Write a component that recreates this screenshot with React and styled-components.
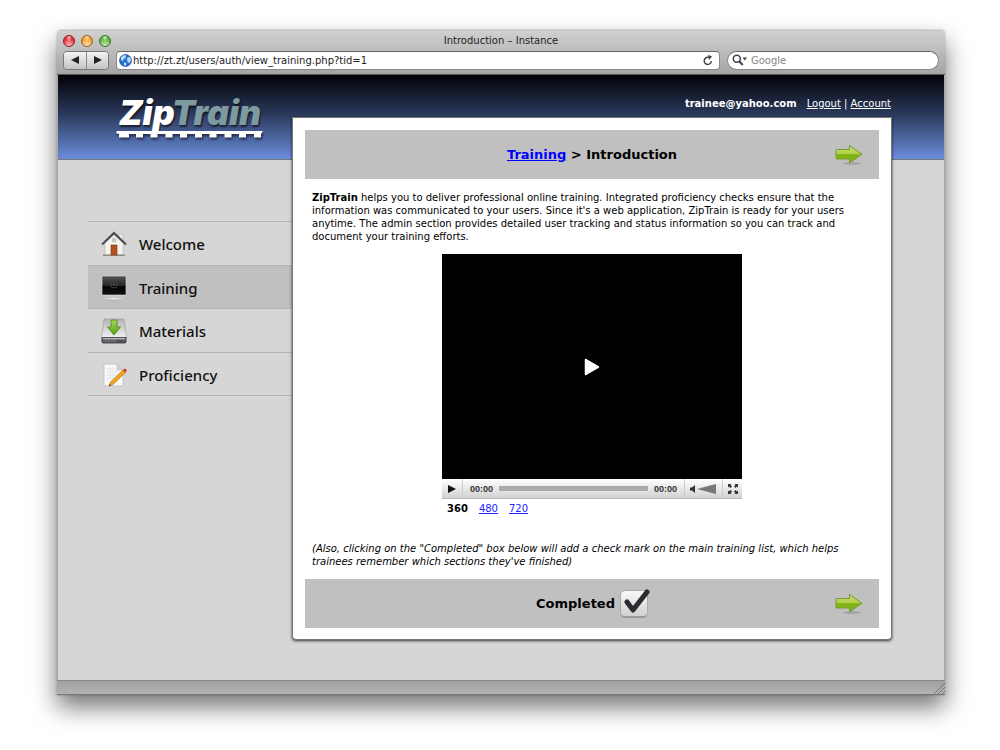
import { useState } from "react";
import styled, { createGlobalStyle } from "styled-components";

const menu = [
  { id: "welcome", label: "Welcome", Icon: HouseIcon },
  { id: "training", label: "Training", Icon: ScreenIcon },
  { id: "materials", label: "Materials", Icon: DriveIcon },
  { id: "proficiency", label: "Proficiency", Icon: NoteIcon },
];

export default function App() {
  const [done, setDone] = useState(true);

  return (
    <>
      <GlobalStyle />
      <Desktop>
        <Window>
          <Chrome>
            <TitleRow>
              <Light color="#e8353b" edge="#8d2226" aria-label="Close" />
              <Light color="#f3a02c" edge="#9a5c1c" aria-label="Minimize" />
              <Light color="#62b53c" edge="#3d7527" aria-label="Zoom" />
              <Title>Introduction – Instance</Title>
            </TitleRow>
            <Toolbar>
              <NavButtons>
                <NavButton aria-label="Back">
                  <svg width="8" height="8" viewBox="0 0 8 8">
                    <path d="M0 4 8 0v8z" fill="#222" />
                  </svg>
                </NavButton>
                <NavButton aria-label="Forward">
                  <svg width="8" height="8" viewBox="0 0 8 8">
                    <path d="M8 4 0 0v8z" fill="#222" />
                  </svg>
                </NavButton>
              </NavButtons>
              <AddressBar>
                <GlobeIcon />
                <BarInput
                  aria-label="Address"
                  defaultValue="http://zt.zt/users/auth/view_training.php?tid=1"
                />
                <ReloadButton aria-label="Reload">
                  <svg width="10" height="11" viewBox="0 0 10 11" fill="none">
                    <path d="M8.4 6.2A3.6 3.6 0 1 1 6.4 2.6" stroke="#444" strokeWidth="1.5" />
                    <path d="M4.8 0 9 1.2 6.4 4.9z" fill="#444" />
                  </svg>
                </ReloadButton>
              </AddressBar>
              <SearchBar>
                <svg width="16" height="12" viewBox="0 0 16 12" fill="none">
                  <circle cx="4.8" cy="4.8" r="3.5" stroke="#444" strokeWidth="1.5" />
                  <path d="m7.3 7.3 3.4 3.7" stroke="#444" strokeWidth="2" />
                  <path d="M10.5 3.5h4.6l-2.3 3z" fill="#444" />
                </svg>
                <BarInput aria-label="Search" placeholder="Google" />
              </SearchBar>
            </Toolbar>
          </Chrome>

          <Page>
            <Sidebar>
              <Logo />
              <Menu>
                {menu.map(({ id, label, Icon }) => (
                  <MenuLink key={id} href={`#${id}`} $active={id === "training"}>
                    <Icon />
                    {label}
                  </MenuLink>
                ))}
              </Menu>
            </Sidebar>

            <Main>
              <Account>
                <b>trainee@yahoo.com</b>
                <span>
                  <a href="#logout">Logout</a> | <a href="#account">Account</a>
                </span>
              </Account>
              <Panel>
                <Band>
                  <Heading>
                    <a href="#training">Training</a> &gt; Introduction
                  </Heading>
                  <NextLink href="#next" aria-label="Next">
                    <ArrowIcon id="top" />
                  </NextLink>
                </Band>

                <Text>
                  <b>ZipTrain</b> helps you to deliver professional online training. Integrated
                  proficiency checks ensure that the information was communicated to your users.
                  Since it's a web application, ZipTrain is ready for your users anytime. The admin
                  section provides detailed user tracking and status information so you can track
                  and document your training efforts.
                </Text>

                <Player>
                  <Video aria-label="Play video">
                    <svg width="16" height="18" viewBox="0 0 16 18">
                      <path
                        d="M1.5 1.5v15L14.5 9z"
                        fill="#fff"
                        stroke="#fff"
                        strokeWidth="1.5"
                        strokeLinejoin="round"
                      />
                    </svg>
                  </Video>
                  <Controls>
                    <ControlButton aria-label="Play">
                      <svg width="8" height="8" viewBox="0 0 8 8">
                        <path d="M0 0v8l8-4z" fill="#111" />
                      </svg>
                    </ControlButton>
                    <Timeline>
                      <span>00:00</span>
                      <Seek type="range" aria-label="Seek" defaultValue="0" />
                      <span>00:00</span>
                    </Timeline>
                    <ControlButton $wide aria-label="Volume">
                      <svg width="27" height="10" viewBox="0 0 27 10">
                        <path d="M0 3.5h2L5 1v8L2 6.500H0z" fill="#333" />
                        <path d="M7 5 26 0v10z" fill="#777" />
                      </svg>
                    </ControlButton>
                    <ControlButton aria-label="Full screen">
                      <svg width="10" height="10" viewBox="0 0 10 10">
                        <path
                          d="M0 0h3.500L2.600 1 4 2.400 2.400 4 1 2.600 0 3.500zM10 0v3.500L9 2.600 7.600 4 6 2.400 7.400 1 6.500 0zM0 10V6.500l1 .9L2.400 6 4 7.600 2.600 9l.9 1zM10 10H6.500l.9-1L6 7.600 7.600 6 9 7.400l1-.9z"
                          fill="#333"
                        />
                      </svg>
                    </ControlButton>
                  </Controls>
                  <Sizes>
                    <b>360</b>
                    <a href="#480">480</a>
                    <a href="#720">720</a>
                  </Sizes>
                </Player>

                <Note>
                  (Also, clicking on the "Completed" box below will add a check mark on the main
                  training list, which helps trainees remember which sections they've finished)
                </Note>

                <Band>
                  <Completed>
                    Completed
                    <CheckBox>
                      <input
                        type="checkbox"
                        checked={done}
                        onChange={(e) => setDone(e.target.checked)}
                      />
                      {done && <CheckMark />}
                    </CheckBox>
                  </Completed>
                  <NextLink href="#next" aria-label="Next">
                    <ArrowIcon id="bottom" />
                  </NextLink>
                </Band>
              </Panel>
            </Main>
          </Page>

          <StatusBar>
            <svg width="11" height="11" viewBox="0 0 11 11" stroke="#777">
              <path d="M0 11 11 0M4 11l7-7M8 11l3-3" />
            </svg>
          </StatusBar>
        </Window>
      </Desktop>
    </>
  );
}

function Logo() {
  return (
    <LogoBox>
      <LogoText>
        Zip<span>Train</span>
      </LogoText>
      <svg width="147" height="8" viewBox="0 0 147 8">
        <path
          fill="#fff"
          d="M1 0h146l-2 3v3.500h-7V3h-8v3.500h-7V3h-7.500v3.500h-7V3h-8v3.500h-7V3h-7.500v3.500h-7V3h-8v3.500h-7V3h-7.500v3.500h-7V3h-8v3.500h-7V3h-7.500v3.500h-7V3h-7v3.500H3V3L0 2z"
        />
      </svg>
    </LogoBox>
  );
}

function GlobeIcon() {
  return (
    <svg width="13" height="13" viewBox="0 0 13 13">
      <circle cx="6.5" cy="6.5" r="6" fill="#2a72cf" stroke="#174b98" strokeWidth=".7" />
      <path d="M2 3.500C4 1 6 1 7 1.500L6.500 4 4.500 5 4 7 2 6zM8 4l3-1 1 3-1.500 3L8.500 8zM5 8l2.500 1.500L6.500 12 5 11z" fill="#bfe0fb" />
    </svg>
  );
}

function HouseIcon() {
  return (
    <svg width="26" height="26" viewBox="0 0 26 26">
      <path d="M18 3h4v7h-4z" fill="#eee" stroke="#aaa" strokeWidth=".5" />
      <path d="M4 12 13 4l9 8v12H4z" fill="#f5f3ee" stroke="#bbb" strokeWidth=".6" />
      <path d="M2 23.500h22v1.500H2z" fill="#8d8d86" />
      <path d="M10 14h6v10h-6z" fill="#b5501f" stroke="#7c3312" strokeWidth=".6" />
      <circle cx="13" cy="9" r="2" fill="#c9ced1" stroke="#999" strokeWidth=".4" />
      <path d="M1 13.500 13 2l12 11.500" fill="none" stroke="#4b4b4b" strokeWidth="2" />
    </svg>
  );
}

function ScreenIcon() {
  return (
    <svg width="26" height="26" viewBox="0 0 26 26">
      <defs>
        <linearGradient id="screen" x2="0" y2="1">
          <stop offset="0" stopColor="#555" />
          <stop offset=".5" stopColor="#262626" />
          <stop offset=".55" stopColor="#050505" />
          <stop offset="1" stopColor="#111" />
        </linearGradient>
      </defs>
      <path d="M1 1h24v19H1z" fill="url(#screen)" stroke="#ddd" strokeWidth=".6" />
      <circle cx="13" cy="9.500" r="3.500" fill="none" stroke="#444" />
      <path d="M12 8v3l2.500-1.500z" fill="#555" />
      <path d="M1 20h24v1.500H1z" fill="#d0d0d0" />
      <ellipse cx="13" cy="24" rx="9" ry="1.500" fill="#e0e0e0" />
      <path d="M5 24.500q8 2 16 0" fill="none" stroke="#999" strokeWidth=".6" />
    </svg>
  );
}

function DriveIcon() {
  return (
    <svg width="26" height="26" viewBox="0 0 26 26">
      <defs>
        <linearGradient id="drive" x2="0" y2="1">
          <stop offset="0" stopColor="#b4b4b8" />
          <stop offset="1" stopColor="#f2f2f2" />
        </linearGradient>
        <linearGradient id="down" x2="0" y2="1">
          <stop offset="0" stopColor="#a6d957" />
          <stop offset="1" stopColor="#579f12" />
        </linearGradient>
      </defs>
      <path d="M3 1h20l2.500 19H.5z" fill="url(#drive)" stroke="#999" strokeWidth=".6" />
      <path d="M.5 19h25v4.500q0 2-2 2h-21q-2 0-2-2z" fill="#505058" />
      <path d="M2 20h22v1.500H2z" fill="#b4b4b8" />
      <path d="M4 23h12" stroke="#9a9aa4" strokeDasharray="2 1" />
      <path d="M10 2h6v7h3.500L13 17 6.500 9H10z" fill="url(#down)" stroke="#4c870d" strokeWidth=".8" />
    </svg>
  );
}

function NoteIcon() {
  return (
    <svg width="26" height="26" viewBox="0 0 26 26">
      <path d="M3 2h13l6 6v16H3z" fill="#f7f7f7" stroke="#bbb" strokeWidth=".8" />
      <path d="M16 2v6h6z" fill="#d5d5d5" stroke="#bbb" strokeWidth=".6" />
      <path d="M6 7h7M6 10h10M6 13h9M6 16h6" stroke="#dddfe0" />
      <path d="m8 24 1.500-4L22 8l2.500 2.500L12 22.500z" fill="#f2a51f" stroke="#a86a12" strokeWidth=".6" />
      <path d="M22 8l1.500-1.300q2-.4 2.200 2L24.500 10.500z" fill="#d83333" />
      <path d="m8 24 .6-1.700L10 23.500z" fill="#222" />
    </svg>
  );
}

function ArrowIcon({ id }) {
  return (
    <svg width="28" height="22" viewBox="0 0 28 22">
      <defs>
        <linearGradient id={id} x2="0" y2="1">
          <stop offset="0" stopColor="#c8dc72" />
          <stop offset=".48" stopColor="#b1d047" />
          <stop offset=".52" stopColor="#7fb412" />
          <stop offset="1" stopColor="#80b51c" />
        </linearGradient>
      </defs>
      <ellipse cx="17" cy="19.500" rx="9" ry="1.500" fill="#999" opacity=".7" />
      <path
        d="M1 6.500q0-1 1-1h12.500V1.500L27 10.200 14.500 19v-4H2q-1 0-1-1z"
        fill={`url(#${id})`}
        stroke="#7b9a35"
        strokeWidth="1"
        strokeLinejoin="round"
      />
    </svg>
  );
}

function CheckMark() {
  return (
    <svg width="30" height="30" viewBox="0 0 30 30">
      <path
        d="M7 13l6 8L27 3"
        fill="none"
        stroke="#2b2c31"
        strokeWidth="5"
        strokeLinecap="round"
        strokeLinejoin="round"
      />
    </svg>
  );
}

const GlobalStyle = createGlobalStyle`
  * {
    box-sizing: border-box;
  }

  body {
    margin: 0;
    background: #fff;
    color: #000;
    font-family: "DejaVu Sans", Verdana, sans-serif;
    font-size: 10px;
  }

  button {
    padding: 0;
    border: 0;
    background: none;
    display: flex;
    align-items: center;
    justify-content: center;
  }

  svg {
    display: block;
    flex-shrink: 0;
  }
`;

const Desktop = styled.div`
  padding: 30px 55px 55px 57px;
`;

const Window = styled.div`
  border-radius: 4px 4px 0 0;
  overflow: hidden;
  box-shadow: 0 12px 24px rgba(0, 0, 0, 0.55), 0 0 2px rgba(0, 0, 0, 0.3);
`;

const Chrome = styled.header`
  height: 45px;
  padding: 0 6px;
  background: linear-gradient(#d0d0d0, #a5a5a5);
  border-top: 1px solid #c2c2c2;
  border-bottom: 1px solid #555;
`;

const TitleRow = styled.div`
  height: 19px;
  display: flex;
  align-items: center;
  gap: 6px;
`;

const Title = styled.div`
  flex: 1;
  margin-right: 54px;
  text-align: center;
  color: #222;
`;

const Light = styled.button`
  && {
    width: 12px;
    height: 12px;
    border: 1px solid ${(p) => p.edge};
    border-radius: 50%;
    background: radial-gradient(circle at 50% 90%, #ffffffb0, transparent 60%),
      radial-gradient(ellipse at 50% 15%, #ffffffc0, transparent 35%), ${(p) => p.color};
  }
`;

const Toolbar = styled.div`
  height: 20px;
  display: flex;
  align-items: center;
  gap: 7px;
`;

const NavButtons = styled.div`
  display: flex;
  border: 1px solid #777;
  border-radius: 4px;
  overflow: hidden;
`;

const NavButton = styled.button`
  && {
    width: 22px;
    height: 17px;
    background: linear-gradient(#f4f4f4, #c4c4c4);
  }

  & + & {
    border-left: 1px solid #888;
  }
`;

const AddressBar = styled.div`
  flex: 1;
  height: 19px;
  padding: 0 5px 0 2px;
  display: flex;
  align-items: center;
  gap: 1px;
  background: #fff;
  border: 1px solid #888;
  border-top-color: #666;
  border-radius: 4px;
`;

const SearchBar = styled(AddressBar)`
  flex: 0 0 212px;
  padding-left: 4px;
  gap: 3px;
  border-radius: 10px;
`;

const BarInput = styled.input`
  flex: 1;
  min-width: 0;
  padding: 0;
  border: 0;
  outline: 0;
  background: none;
  color: #222;
  font: inherit;
  line-height: 15px;

  &::placeholder {
    color: #888;
    opacity: 1;
  }
`;

const ReloadButton = styled.button`
  width: 12px;
`;

const Page = styled.div`
  display: flex;
  padding: 0 53px 40px 31px;
  background: linear-gradient(#020205, #2a3759 45%, #6b8ddb) top / 100% 84px no-repeat,
    linear-gradient(#777, #777) 0 84px / 100% 1px no-repeat, #d6d6d6;
  box-shadow: inset 1px 0 #aaa, inset -1px 0 #aaa;
`;

const Sidebar = styled.aside`
  width: 204px;
`;

const LogoBox = styled.div`
  height: 146px;
  padding: 18px 0 0 28px;

  svg {
    filter: drop-shadow(1px 2px 1px #0008);
  }
`;

const LogoText = styled.div`
  height: 38px;
  padding-left: 3px;
  color: #fff;
  font: italic 900 34px/40px Inter, sans-serif;
  text-shadow: 1px 2px 2px #0009;

  span {
    color: #7d9aa0;
  }
`;

const Menu = styled.nav`
  height: 175px;
  display: flex;
  flex-direction: column;
  border-bottom: 1px solid #b5b5b5;
`;

const MenuLink = styled.a`
  flex: 1;
  padding: 2px 13px 0;
  display: flex;
  align-items: center;
  gap: 12px;
  border-top: 1px solid #b5b5b5;
  background: ${(p) => (p.$active ? "#c0c0c0" : "none")};
  color: #111;
  font-family: "Noto Sans", sans-serif;
  font-size: 15px;
  font-weight: 500;
  text-decoration: none;
`;

const Main = styled.main`
  flex: 1;
  min-width: 0;
`;

const Account = styled.div`
  height: 42px;
  padding: 14px 1px 0 0;
  display: flex;
  align-items: center;
  justify-content: flex-end;
  gap: 10px;
  color: #fff;

  a {
    color: inherit;
  }
`;

const Panel = styled.section`
  padding: 12px 12px 11px;
  display: flex;
  flex-direction: column;
  background: #fff;
  border: 1px solid #777;
  border-radius: 0 0 4px 4px;
  box-shadow: 0 1px 3px #000b;
`;

const Band = styled.div`
  height: 49px;
  padding: 0 16px 0 44px;
  display: flex;
  align-items: center;
  background: #c0c0c0;
`;

const Heading = styled.h1`
  flex: 1;
  margin: 0;
  text-align: center;
  font-size: 13px;

  a {
    color: #00f;
  }
`;

const NextLink = styled.a`
  display: block;
`;

const Text = styled.p`
  margin: 0;
  padding: 12px 7px 11px;
  line-height: 13px;
`;

const Note = styled(Text)`
  padding-top: 24px;
  font-style: italic;
`;

const Player = styled.div`
  width: 300px;
  margin: 0 auto;
`;

const Video = styled.button`
  && {
    width: 100%;
    height: 225px;
    background: #000;
  }
`;

const Controls = styled.div`
  height: 20px;
  display: flex;
  background: linear-gradient(#fff, #d2d2d2);
  border-bottom: 1px solid #bbb;
`;

const ControlButton = styled.button`
  width: ${(p) => (p.$wide ? 37 : 20)}px;

  & + & {
    border-left: 1px solid #ccc;
  }
`;

const Timeline = styled.div`
  flex: 1;
  padding: 0 7px;
  display: flex;
  align-items: center;
  gap: 6px;
  border: solid #ccc;
  border-width: 0 1px;
  color: #333;
  font: bold 9px "Liberation Sans", sans-serif;
`;

const Seek = styled.input`
  flex: 1;
  min-width: 0;
  height: 5px;
  margin: 0;
  appearance: none;
  background: #aaa;

  &::-webkit-slider-thumb {
    appearance: none;
    width: 0;
  }
`;

const Sizes = styled.div`
  padding: 3px 5px;
  display: flex;
  gap: 11px;
  line-height: 13px;

  a {
    color: #22f;
  }
`;

const Completed = styled.label`
  flex: 1;
  display: flex;
  align-items: center;
  justify-content: center;
  gap: 5px;
  font-size: 13px;
  font-weight: bold;
`;

const CheckBox = styled.span`
  position: relative;

  input {
    display: block;
    width: 28px;
    height: 28px;
    margin: 0;
    appearance: none;
    border: 1px solid #aaa;
    border-bottom: 2px solid #999;
    border-radius: 5px;
    background: linear-gradient(#fafafa, #d0d0d0);
  }

  svg {
    position: absolute;
    left: 0;
    top: -1px;
    pointer-events: none;
  }
`;

const StatusBar = styled.footer`
  height: 15px;
  display: flex;
  align-items: flex-end;
  justify-content: flex-end;
  background: linear-gradient(#a0a0a0, #b4b4b4);
  border-top: 1px solid #888;
  border-bottom: 1px solid #777;
`;
